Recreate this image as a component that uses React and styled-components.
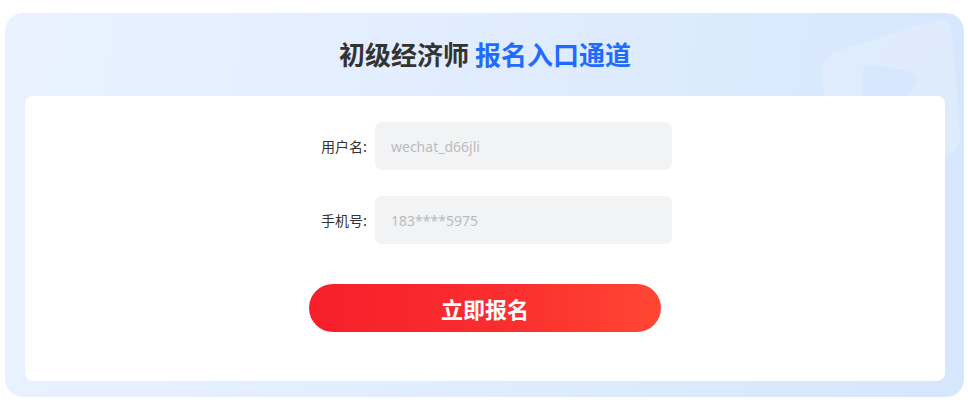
import React from 'react'
import styled, { createGlobalStyle } from 'styled-components'

const Global = createGlobalStyle`
  html, body { margin: 0; padding: 0; background: #fff; }
  body { font-family: "Noto Sans", "Noto Sans CJK SC", sans-serif; }
  * { box-sizing: border-box; }
`

function App() {
  return (
    <Page>
      <Global />
      <Panel>
        <Deco viewBox="0 0 160 200" aria-hidden="true">
          <path d="M18 60 Q17 44 34 38 L128 8 Q146 2 148 20 L156 120 Q158 138 140 144 L44 176 Q27 182 26 164 Z" fill="#ffffff" opacity="0.2" />
          <path d="M58 62 Q58 50 72 52 L104 58 Q118 62 110 74 L100 86 Q94 92 84 90 L66 88 Q58 86 58 78 Z" fill="#cfe2fd" opacity="0.45" />
        </Deco>
        <Title>
          初级经济师 <Accent>报名入口通道</Accent>
        </Title>
        <Card>
          <Form>
            <Row>
              <Label>用户名:</Label>
              <Input placeholder="wechat_d66jli" />
            </Row>
            <Row>
              <Label>手机号:</Label>
              <Input placeholder="183****5975" />
            </Row>
          </Form>
          <Submit type="button">立即报名</Submit>
        </Card>
      </Panel>
    </Page>
  )
}

export default App

const Page = styled.div`
  padding: 13px 4px 8px 5px;
  width: 968px;
`

const Panel = styled.div`
  position: relative;
  overflow: hidden;
  border-radius: 18px;
  background: linear-gradient(100deg, #eaf2ff 0%, #dfecfe 55%, #d5e6fd 100%);
  padding: 0 19px 16px 20px;
`

const Deco = styled.svg`
  position: absolute;
  right: 0;
  top: 0;
  width: 160px;
  height: 200px;
`

const Title = styled.h1`
  position: relative;
  margin: 0;
  height: 83px;
  display: flex;
  align-items: center;
  justify-content: center;
  font-family: "Noto Sans CJK SC", sans-serif;
  font-size: 26px;
  font-weight: 700;
  color: #333;
  padding-bottom: 2px;
  white-space: pre;
`

const Accent = styled.span`
  color: #1f6bff;
`

const Card = styled.div`
  position: relative;
  background: #fff;
  border-radius: 8px;
  padding: 26px 0 49px;
  display: flex;
  flex-direction: column;
  align-items: center;
`

const Form = styled.div`
  display: flex;
  flex-direction: column;
  gap: 26px;
  padding-left: 9px;
`

const Row = styled.div`
  display: flex;
  align-items: center;
  gap: 8px;
`

const Label = styled.label`
  width: 60px;
  text-align: right;
  font-family: "Noto Sans CJK SC", sans-serif;
  font-size: 14px;
  color: #333;
`

const Input = styled.input`
  width: 297px;
  height: 48px;
  border: none;
  outline: none;
  border-radius: 7px;
  background: #f2f3f5;
  padding: 0 16px;
  font-family: "Noto Sans", "Noto Sans CJK SC", sans-serif;
  font-size: 14px;
  color: #333;
  &::placeholder { color: #bbbbbb; }
`

const Submit = styled.button`
  margin-top: 40px;
  width: 352px;
  height: 48px;
  border: none;
  border-radius: 24px;
  background: linear-gradient(90deg, #f61f2a 0%, #fa2e2e 55%, #ff4634 100%);
  color: #fff;
  font-family: "Noto Sans CJK SC", sans-serif;
  font-size: 22px;
  font-weight: 700;
  cursor: pointer;
`
